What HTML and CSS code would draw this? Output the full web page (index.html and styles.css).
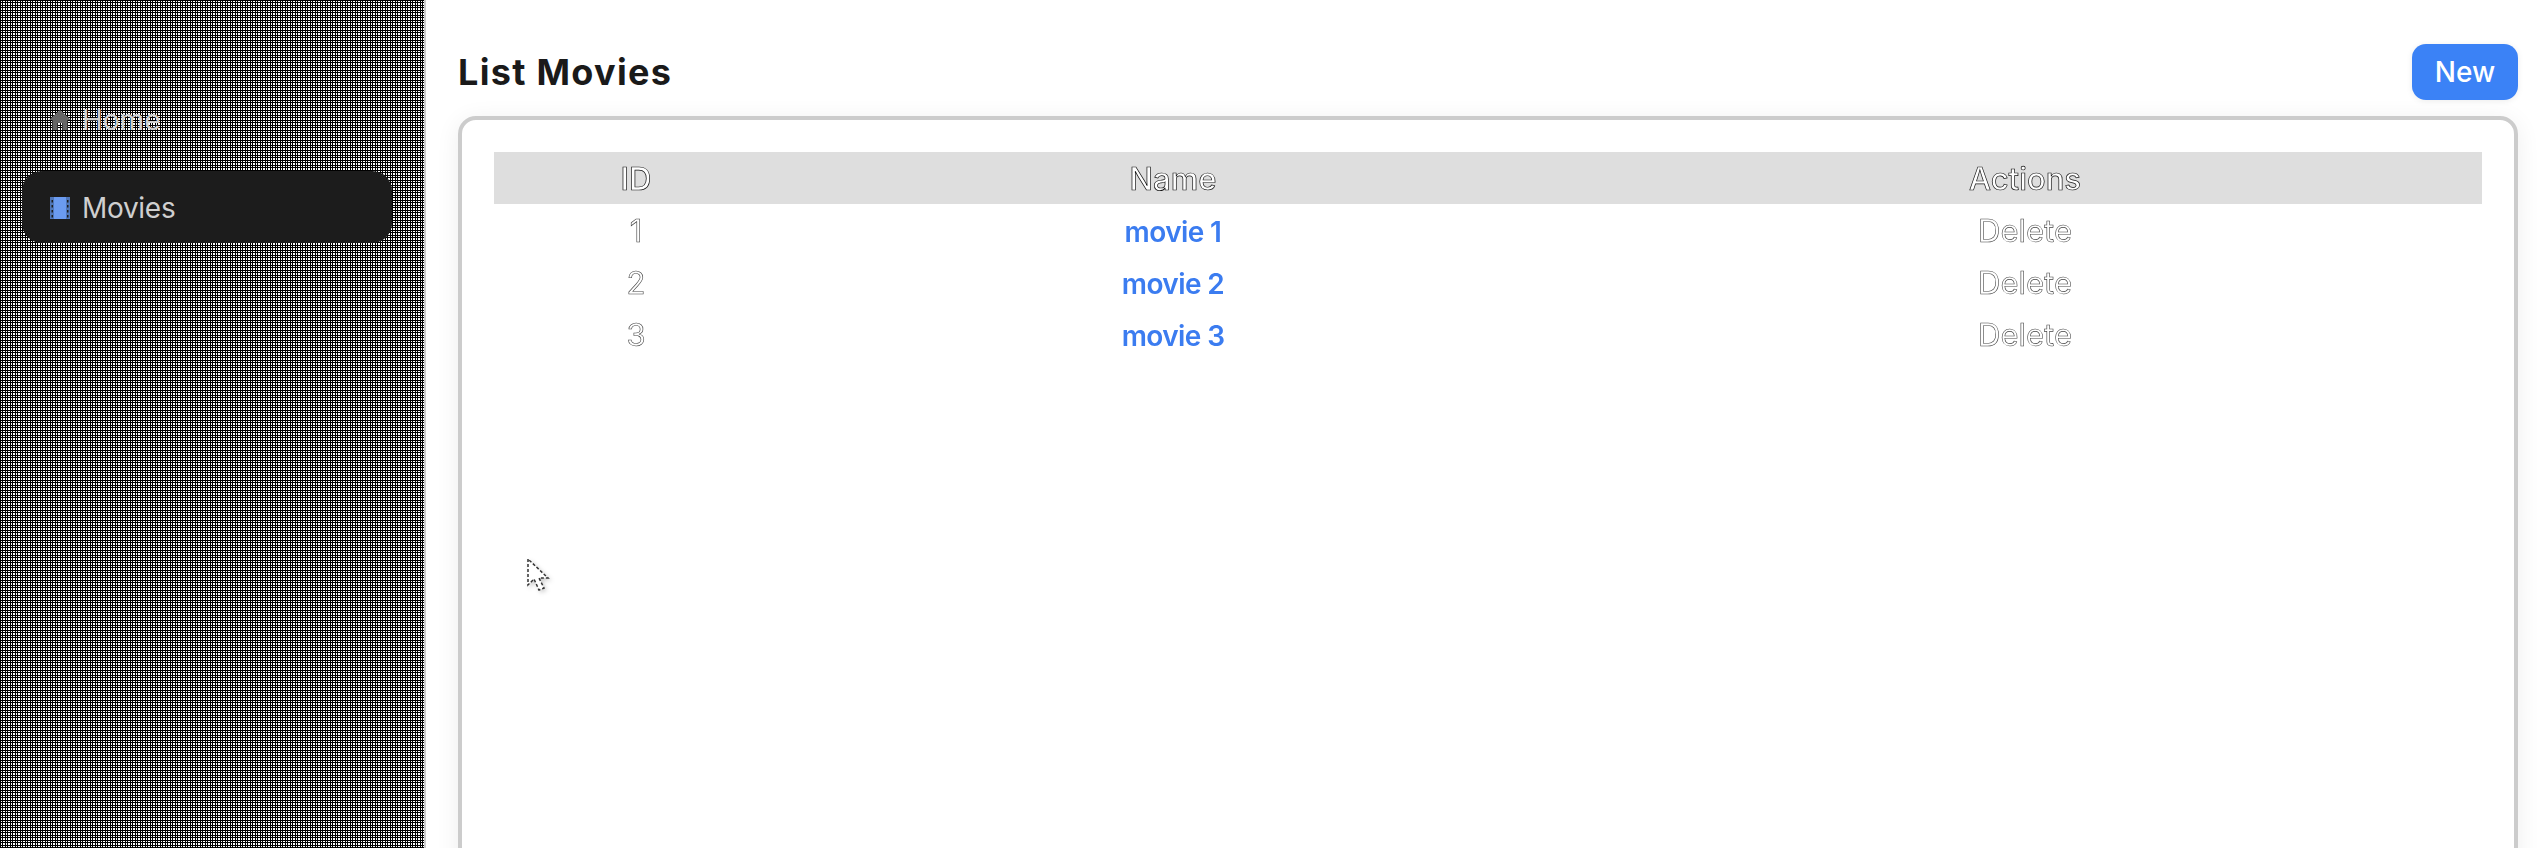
FILE: index.html
```html
<!DOCTYPE html>
<html lang="en">
<head>
  <meta charset="UTF-8">
  <title>List Movies</title>
  <link rel="stylesheet" href="styles.css">
</head>
<body>
  <aside class="sidebar">
    <a class="nav-item" href="#">
      <svg class="nav-icon home-icon" viewBox="0 0 22 20"><path d="M11 0 22 10h-3.500v10h-5v-7h-5v7h-5V10H0z"/></svg>
      <span>Home</span>
    </a>
    <a class="nav-item active" href="#">
      <svg class="nav-icon film-icon" viewBox="0 0 20 22"><path d="M4 0h12v22H4z"/><path class="film-strip" fill-rule="evenodd" d="M0 0h4v22H0zM16 0h4v22h-4zM1.500 3v2.500H3V3zM1.500 8v2.500H3V8zM1.500 13v2.500H3V13zM1.500 18v2.500H3V18zM17 3v2.500h1.500V3zM17 8v2.500h1.500V8zM17 13v2.500h1.500V13zM17 18v2.500h1.500V18z"/></svg>
      <span>Movies</span>
    </a>
  </aside>

  <main class="content">
    <div class="page-head">
      <h1>List Movies</h1>
      <button class="btn-new">New</button>
    </div>

    <div class="card">
      <table class="movies">
        <thead>
          <tr><th class="col-id">ID</th><th class="col-name">Name</th><th>Actions</th></tr>
        </thead>
        <tbody>
          <tr><td>1</td><td><a href="#">movie 1</a></td><td>Delete</td></tr>
          <tr><td>2</td><td><a href="#">movie 2</a></td><td>Delete</td></tr>
          <tr><td>3</td><td><a href="#">movie 3</a></td><td>Delete</td></tr>
        </tbody>
      </table>
    </div>
  </main>

  <svg class="cursor" viewBox="0 0 24 38"><path d="M2 1v26l6-6 5 11 5-2-5-10h9z" fill="#fff" stroke="#333" stroke-width="1.500" stroke-dasharray="3 2"/></svg>
</body>
</html>
```

FILE: styles.css
```css
html, body {
  height: 100%;
}
body {
  margin: 0;
  display: flex;
  overflow: hidden;
  font-family: 'Inter', 'Liberation Sans', sans-serif;
  background-color: white;
  color: #1a1a1a;
}
.sidebar {
  width: 424px;
  flex-shrink: 0;
  box-sizing: border-box;
  padding: 84px 32px 0 22px;
  box-shadow: 2px 0 0 #ccc;
  background-color: #fff;
  background-image:
    linear-gradient(#000 1px, transparent 1px, transparent 2px, #000 2px, #000 3px, transparent 3px),
    linear-gradient(90deg, #000 1px, transparent 1px, transparent 2px, #000 2px, #000 3px, transparent 3px);
  background-size: 5px 5px;
}
.nav-item {
  display: flex;
  align-items: center;
  gap: 11px;
  height: 72px;
  padding: 0 22px 0 27px;
  margin-bottom: 15px;
  border-radius: 20px;
  font-size: 28px;
  color: #cfcfcf;
  text-decoration: none;
}
.nav-item.active {
  padding-top: 2px;
  box-sizing: border-box;
  background-color: #1c1c1c;
  letter-spacing: -0.3px;
}
.nav-icon {
  width: 22px;
  height: 22px;
  flex-shrink: 0;
}
.home-icon {
  fill: #666;
}
.film-icon {
  fill: #6b9bf0;
}
.film-strip {
  fill: #4f76b8;
}
.content {
  flex: 1;
  min-width: 0;
  padding: 44px 22px 0 34px;
}
.page-head {
  display: flex;
  justify-content: space-between;
  align-items: center;
  height: 56px;
  margin-bottom: 16px;
}
h1 {
  margin: 0;
  font-size: 36px;
  font-weight: 700;
  letter-spacing: 1.300px;
}
.btn-new {
  width: 106px;
  height: 56px;
  border: none;
  border-radius: 14px;
  background-color: #3b82f6;
  color: white;
  font-family: inherit;
  font-size: 28px;
  font-weight: 500;
  box-shadow: 0 1px 6px rgba(0,0,0,0.08);
}
.card {
  height: 900px;
  box-sizing: border-box;
  padding: 32px;
  border: 4px solid #ccc;
  border-radius: 18px;
  box-shadow: 0 4px 24px rgba(0,0,0,0.07);
}
.movies {
  width: 100%;
  border-collapse: collapse;
  table-layout: fixed;
  font-size: 31px;
  will-change: transform;
}
.col-id {
  width: 284px;
}
.col-name {
  width: 790px;
}
.movies th {
  height: 52px;
  padding: 0;
  background-color: #dedede;
  font-weight: 500;
  color: white;
  -webkit-text-stroke: 0.7px #111;
}
.movies td {
  height: 52px;
  padding: 0;
  text-align: center;
  color: white;
  -webkit-text-stroke: 0.6px #444;
}
.movies td a {
  font-size: 28px;
  font-weight: 600;
  letter-spacing: -0.6px;
  color: #3b7cf0;
  text-decoration: none;
  -webkit-text-stroke: 0;
}
.cursor {
  position: absolute;
  left: 526px;
  top: 558px;
  width: 24px;
  height: 38px;
  filter: drop-shadow(2px 2px 2px rgba(0,0,0,0.2));
}
```
